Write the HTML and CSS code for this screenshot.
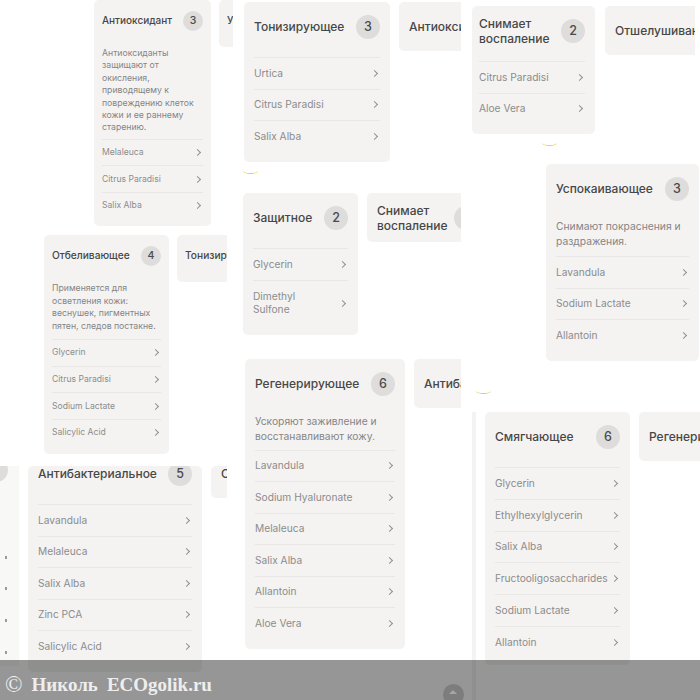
FILE: index.html
```html
<!DOCTYPE html>
<html lang="ru">
  <head>
    <meta charset="UTF-8" />
    <title>Николь ECOgolik.ru</title>
    <link rel="stylesheet" href="styles.css">
  </head>
  <body>
    <!-- Антиоксидант -->
    <div class="shot shot-a">
      <div class="card">
        <div class="head"><span class="name">Антиоксидант</span><span class="count">3</span></div>
        <p class="text">Антиоксиданты защищают от окисления, приводящему к повреждению клеток кожи и ее раннему старению.</p>
        <div class="row"><span>Melaleuca</span><i class="arrow"></i></div>
        <div class="row"><span>Citrus Paradisi</span><i class="arrow"></i></div>
        <div class="row"><span>Salix Alba</span><i class="arrow"></i></div>
      </div>
      <div class="card next"><div class="head"><span class="name">Ув</span></div></div>
    </div>

    <!-- Тонизирующее -->
    <div class="shot shot-b">
      <div class="card">
        <div class="head"><span class="name">Тонизирующее</span><span class="count">3</span></div>
        <div class="row"><span>Urtica</span><i class="arrow"></i></div>
        <div class="row"><span>Citrus Paradisi</span><i class="arrow"></i></div>
        <div class="row"><span>Salix Alba</span><i class="arrow"></i></div>
      </div>
      <div class="card next"><div class="head"><span class="name">Антиоксид</span></div></div>
    </div>

    <!-- Снимает воспаление -->
    <div class="shot shot-c">
      <div class="card">
        <div class="head"><span class="name">Снимает воспаление</span><span class="count">2</span></div>
        <div class="row"><span>Citrus Paradisi</span><i class="arrow"></i></div>
        <div class="row"><span>Aloe Vera</span><i class="arrow"></i></div>
      </div>
      <div class="card next"><div class="head"><span class="name">Отшелушивающее</span></div></div>
    </div>

    <!-- Успокаивающее -->
    <div class="shot shot-d">
      <div class="card">
        <div class="head"><span class="name">Успокаивающее</span><span class="count">3</span></div>
        <p class="text">Снимают покраснения и раздражения.</p>
        <div class="row"><span>Lavandula</span><i class="arrow"></i></div>
        <div class="row"><span>Sodium Lactate</span><i class="arrow"></i></div>
        <div class="row"><span>Allantoin</span><i class="arrow"></i></div>
      </div>
    </div>

    <!-- Защитное -->
    <div class="shot shot-e">
      <div class="card">
        <div class="head"><span class="name">Защитное</span><span class="count">2</span></div>
        <div class="row"><span>Glycerin</span><i class="arrow"></i></div>
        <div class="row"><span>Dimethyl Sulfone</span><i class="arrow"></i></div>
      </div>
      <div class="card next"><div class="head"><span class="name">Снимает воспаление</span><span class="count">2</span></div></div>
    </div>

    <!-- Отбеливающее -->
    <div class="shot shot-f">
      <div class="card">
        <div class="head"><span class="name">Отбеливающее</span><span class="count">4</span></div>
        <p class="text">Применяется для осветления кожи: веснушек, пигментных пятен, следов постакне.</p>
        <div class="row"><span>Glycerin</span><i class="arrow"></i></div>
        <div class="row"><span>Citrus Paradisi</span><i class="arrow"></i></div>
        <div class="row"><span>Sodium Lactate</span><i class="arrow"></i></div>
        <div class="row"><span>Salicylic Acid</span><i class="arrow"></i></div>
      </div>
      <div class="card next"><div class="head"><span class="name">Тонизирующее</span></div></div>
    </div>

    <!-- Антибактериальное -->
    <div class="shot shot-g">
      <div class="card">
        <div class="head"><span class="name">Антибактериальное</span><span class="count">5</span></div>
        <div class="row"><span>Lavandula</span><i class="arrow"></i></div>
        <div class="row"><span>Melaleuca</span><i class="arrow"></i></div>
        <div class="row"><span>Salix Alba</span><i class="arrow"></i></div>
        <div class="row"><span>Zinc PCA</span><i class="arrow"></i></div>
        <div class="row"><span>Salicylic Acid</span><i class="arrow"></i></div>
      </div>
      <div class="card next"><div class="head"><span class="name">Се</span></div></div>
    </div>

    <!-- Регенерирующее -->
    <div class="shot shot-h">
      <div class="card">
        <div class="head"><span class="name">Регенерирующее</span><span class="count">6</span></div>
        <p class="text">Ускоряют заживление и восстанавливают кожу.</p>
        <div class="row"><span>Lavandula</span><i class="arrow"></i></div>
        <div class="row"><span>Sodium Hyaluronate</span><i class="arrow"></i></div>
        <div class="row"><span>Melaleuca</span><i class="arrow"></i></div>
        <div class="row"><span>Salix Alba</span><i class="arrow"></i></div>
        <div class="row"><span>Allantoin</span><i class="arrow"></i></div>
        <div class="row"><span>Aloe Vera</span><i class="arrow"></i></div>
      </div>
      <div class="card next"><div class="head"><span class="name">Антибактериальное</span></div></div>
    </div>

    <!-- Смягчающее -->
    <div class="shot shot-i">
      <div class="card">
        <div class="head"><span class="name">Смягчающее</span><span class="count">6</span></div>
        <div class="row"><span>Glycerin</span><i class="arrow"></i></div>
        <div class="row"><span>Ethylhexylglycerin</span><i class="arrow"></i></div>
        <div class="row"><span>Salix Alba</span><i class="arrow"></i></div>
        <div class="row"><span>Fructooligosaccharides</span><i class="arrow"></i></div>
        <div class="row"><span>Sodium Lactate</span><i class="arrow"></i></div>
        <div class="row"><span>Allantoin</span><i class="arrow"></i></div>
      </div>
      <div class="card next"><div class="head"><span class="name">Регенерирующее</span></div></div>
    </div>

    <!-- обрезки соседних скриншотов -->
    <div class="strip strip-left">
      <div class="cut-circle"></div>
      <div class="tick tick-1"></div>
      <div class="tick tick-2"></div>
      <div class="tick tick-3"></div>
      <div class="tick tick-4"></div>
    </div>
    <div class="strip strip-mid"></div>
    <div class="loader loader-a"></div>
    <div class="loader loader-b"></div>
    <div class="loader loader-c"></div>

    <div class="watermark">
      <span class="copy">©</span>
      <span class="sign">Николь</span>
      <span class="sign">ECOgolik.ru</span>
    </div>
    <div class="up"></div>
  </body>
</html>
```

FILE: styles.css
```css
body {
  margin: 0;
  width: 700px;
  height: 700px;
  position: relative;
  overflow: hidden;
  background: #fff;
  font-family: "Inter", "Liberation Sans", sans-serif;
}

/* каждый скриншот лежит на холсте на своём месте */
.shot {
  position: absolute;
  display: flex;
  align-items: flex-start;
  gap: 9px;
  overflow: hidden;
}
.shot-a { left: 94px; top: 0; width: 139px; height: 230px; gap: 8px; }
.shot-b { left: 244px; top: 2px; width: 217px; height: 162px; }
.shot-c { left: 472px; top: 6px; width: 223px; height: 130px; gap: 10px; }
.shot-d { left: 546px; top: 164px; width: 153px; height: 198px; }
.shot-e { left: 243px; top: 193px; width: 218px; height: 142px; }
.shot-f { left: 44px; top: 235px; width: 183px; height: 220px; gap: 8px; }
.shot-g { left: 28px; top: 466px; width: 199px; height: 208px; }
.shot-h { left: 245px; top: 359px; width: 216px; height: 292px; }
.shot-i { left: 485px; top: 412px; width: 215px; height: 256px; }

.card {
  flex: none;
  box-sizing: border-box;
  padding: 0 10px 10px;
  background: #f4f3f2;
  border-radius: 5px;
}
.shot-a .card { width: 117px; padding: 0 8px 8px; }
.shot-b .card { width: 146px; }
.shot-c .card { width: 123px; padding-left: 7px; }
.shot-d .card { width: 153px; }
.shot-e .card { width: 115px; }
.shot-f .card { width: 125px; padding: 0 8px 8px; }
.shot-g .card { width: 174px; }
.shot-h .card { width: 160px; }
.shot-i .card { width: 145px; padding-bottom: 7px; }

.shot .next {
  width: 150px;
  padding-bottom: 0;
}
.shot-c .next { padding-left: 10px; }

.head {
  display: flex;
  align-items: center;
  justify-content: space-between;
  gap: 6px;
  height: 49px;
  margin-bottom: 6px;
}
.next .head { margin-bottom: 0; }
.shot-a .head { height: 41px; margin-bottom: 6px; }
.shot-f .head { height: 41px; margin-bottom: 6px; }
.shot-g .head { margin-top: -17px; }

.name {
  color: #474747;
  font-size: 12px;
  font-weight: 500;
  line-height: 15px;
}
.shot-a .name { font-size: 10px; }
.shot-f .name { font-size: 10.2px; }
.next .name { white-space: nowrap; }
.shot-e .next .name { white-space: normal; }
.shot-e .next .head { width: 76px; }

.count {
  flex: none;
  width: 24px;
  height: 24px;
  border-radius: 50%;
  background: #dedddc;
  color: #4a4a4a;
  font-size: 12.5px;
  font-weight: 500;
  line-height: 24px;
  text-align: center;
}
.shot-a .count,
.shot-f .count {
  width: 20px;
  height: 20px;
  font-size: 10.5px;
  line-height: 20px;
}

.text {
  margin: 0;
  padding-bottom: 7px;
  color: #858585;
  font-size: 10.3px;
  line-height: 15px;
}
.shot-a .text,
.shot-f .text {
  font-size: 8.7px;
  line-height: 12.4px;
  padding-bottom: 5px;
}
.shot-f .text { line-height: 12.6px; padding-bottom: 6.5px; }
.shot-h .text { margin-top: -0.5px; padding-bottom: 6px; }

.row {
  display: flex;
  align-items: center;
  justify-content: space-between;
  min-height: 30.5px;
  border-top: 1px solid #e8e7e6;
  color: #8c8c8c;
  font-size: 10.2px;
  line-height: 13px;
}
.shot-i .row { min-height: 30.8px; }
.shot-a .row { min-height: 25.5px; font-size: 8.6px; }
.shot-f .row { min-height: 25.7px; font-size: 8.6px; }
.shot-e .row span { max-width: 70px; padding: 9px 0; }

.arrow {
  flex: none;
  width: 4px;
  height: 4px;
  margin-right: 3px;
  border-top: 1px solid #909090;
  border-right: 1px solid #909090;
  transform: rotate(45deg);
}

.strip {
  position: absolute;
  overflow: hidden;
  background: #f8f8f7;
}
.strip-left { left: 0; top: 466px; width: 19px; height: 200px; }
.strip-mid { left: 472px; top: 412px; width: 4px; height: 288px; background: #f4f3f2; }

.cut-circle {
  position: absolute;
  left: -16px;
  top: -8px;
  width: 24px;
  height: 24px;
  border-radius: 50%;
  background: #dedddc;
}
.tick {
  position: absolute;
  left: 5px;
  width: 2px;
  height: 3px;
  background: #9a9a9a;
}
.tick-1 { top: 90px; }
.tick-2 { top: 121px; }
.tick-3 { top: 153px; }
.tick-4 { top: 185px; }

/* кусочек жёлтого спиннера */
.loader {
  position: absolute;
  width: 15px;
  height: 5px;
  border-bottom: 1.5px solid #e6d23c;
  border-radius: 0 0 50% 50%;
}
.loader-a { left: 542px; top: 140px; }
.loader-b { left: 243px; top: 168px; }
.loader-c { left: 476px; top: 388px; }

.watermark {
  position: absolute;
  left: 0;
  right: 0;
  bottom: 0;
  height: 40px;
  box-sizing: border-box;
  padding: 10px 0 0 5px;
  display: flex;
  align-items: center;
  gap: 9px;
  background: rgba(0, 0, 0, 0.41);
  color: #eee;
  font-family: "Liberation Serif", serif;
  font-size: 19px;
  font-weight: 700;
}
.copy { font-weight: 400; font-size: 23px; }

.up {
  position: absolute;
  left: 443px;
  top: 684px;
  width: 21px;
  height: 21px;
  border-radius: 50%;
  background: #7d7d7d;
}
.up::after {
  content: "";
  position: absolute;
  left: 6px;
  top: 6px;
  border-left: 4px solid transparent;
  border-right: 4px solid transparent;
  border-bottom: 4px solid #a5a5a5;
}
```
